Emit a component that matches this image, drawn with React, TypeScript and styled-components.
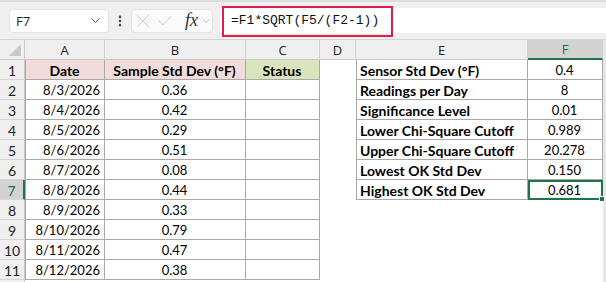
import styled, { createGlobalStyle } from 'styled-components';
import { ChevronDown, X, Check, EllipsisVertical } from 'lucide-react';

const Global = createGlobalStyle`
  html, body { margin: 0; padding: 0; background: #e6e6e6; }
  body { width: 606px; height: 282px; overflow: hidden; }
`;

const Page = styled.div`
  width: 606px;
  height: 282px;
  overflow: hidden;
  display: flex;
  flex-direction: column;
  font-family: Lato, "Liberation Sans", sans-serif;
`;

const Toolbar = styled.div`
  position: relative;
  height: 40px;
  box-sizing: border-box;
  flex: none;
  display: flex;
  align-items: center;
  padding: 0 0 0 9px;
  background: #efefef;
  border-top: 2px solid #dcdcdc;
  border-bottom: 1px solid #d4d4d4;
`;

const NameBox = styled.div`
  width: 100px;
  height: 24px;
  box-sizing: border-box;
  display: flex;
  align-items: center;
  justify-content: space-between;
  padding: 0 5px 0 6px;
  background: #fff;
  border: 1px solid #e2e2e2;
  border-radius: 4px;
  font-family: "Segoe UI", "Open Sans", sans-serif;
  font-size: 13px;
  color: #222;
`;

const Dots = styled.div`
  width: 22px;
  display: flex;
  justify-content: center;
  color: #444;
`;

const IconGroup = styled.div`
  width: 82px;
  height: 24px;
  box-sizing: border-box;
  flex: none;
  display: flex;
  align-items: center;
  gap: 2px;
  padding: 0;
  background: #fafafa;
  border: 1px solid #e4e4e4;
  border-radius: 4px;
  color: #c4c4c4;
  svg { flex: none; }
`;

const Fx = styled.span`
  font-family: "Liberation Serif", serif;
  font-style: italic;
  font-size: 18px;
  color: #333;
  margin-left: 9px;
`;

const FormulaInput = styled.div`
  flex: 1;
  height: 25px;
  margin-left: 7px;
  display: flex;
  align-items: center;
  padding-left: 11px;
  background: #fff;
  font-family: "Liberation Mono", monospace;
  font-size: 13px;
  color: #111;
`;

const Highlight = styled.div`
  position: absolute;
  left: 222px;
  top: 4px;
  width: 171px;
  height: 31px;
  box-sizing: border-box;
  border: 2.5px solid #e21a4d;
`;

const Sheet = styled.div`
  display: grid;
  grid-template-columns: 25px 80px 141px 74px 36px 172px 75px 3px;
  grid-auto-rows: 20px;
  background: #fff;
`;

const Corner = styled.div`
  position: relative;
  background: #efefef;
  border-right: 1px solid #c8c8c8;
  border-bottom: 1px solid #c8c8c8;
  box-sizing: border-box;
  &::after {
    content: '';
    position: absolute;
    right: 3px;
    bottom: 3px;
    border-style: solid;
    border-width: 0 0 12px 12px;
    border-color: transparent transparent #c9c9c9 transparent;
  }
`;

const ColHead = styled.div<{ $active?: boolean }>`
  display: flex;
  align-items: center;
  justify-content: center;
  box-sizing: border-box;
  font-family: "Segoe UI", "Open Sans", sans-serif;
  font-size: 13px;
  color: ${p => (p.$active ? '#1e6b3f' : '#222')};
  background: ${p => (p.$active ? '#d3d3d3' : '#efefef')};
  border-right: 1px solid #d0d0d0;
  border-bottom: ${p => (p.$active ? '2px solid #217346' : '1px solid #c8c8c8')};
`;

const Filler = styled.div`
  background: #e6e6e6;
`;

const RowHead = styled.div<{ $active?: boolean }>`
  display: flex;
  align-items: center;
  justify-content: center;
  box-sizing: border-box;
  font-size: 14px;
  padding-top: 1px;
  color: ${p => (p.$active ? '#1e6b3f' : '#222')};
  background: ${p => (p.$active ? '#d3d3d3' : '#efefef')};
  border-bottom: 1px solid #d6d6d6;
  border-right: ${p => (p.$active ? '2px solid #217346' : '1px solid #c8c8c8')};
`;

type Align = 'left' | 'center' | 'right';

const Cell = styled.div<{
  $align?: Align;
  $bold?: boolean;
  $fill?: string;
  $boxed?: boolean;
  $first?: boolean;
  $selected?: boolean;
}>`
  position: relative;
  box-sizing: border-box;
  display: flex;
  align-items: center;
  justify-content: ${p => (p.$align === 'right' ? 'flex-end' : p.$align === 'center' ? 'center' : 'flex-start')};
  padding: 1px 4px 0 3px;
  font-size: ${p => (p.$bold ? '14px' : '13px')};
  font-weight: ${p => (p.$bold ? 700 : 400)};
  color: #000;
  white-space: nowrap;
  background: ${p => p.$fill || '#fff'};
  border-right: ${p => (p.$boxed ? '1px solid #a9a9a9' : 'none')};
  border-bottom: ${p => (p.$boxed ? '1px solid #a9a9a9' : 'none')};
  border-left: ${p => (p.$first ? '1px solid #a9a9a9' : 'none')};
  outline: ${p => (p.$selected ? '2px solid #217346' : 'none')};
  outline-offset: -2px;
  z-index: ${p => (p.$selected ? 1 : 0)};
`;

const FillHandle = styled.span`
  position: absolute;
  right: -3px;
  bottom: -3px;
  width: 6px;
  height: 6px;
  background: #217346;
  border: 1px solid #fff;
  box-sizing: border-box;
`;

const cols = ['A', 'B', 'C', 'D', 'E', 'F'];

const samples: [string, string][] = [
  ['8/3/2026', '0.36'],
  ['8/4/2026', '0.42'],
  ['8/5/2026', '0.29'],
  ['8/6/2026', '0.51'],
  ['8/7/2026', '0.08'],
  ['8/8/2026', '0.44'],
  ['8/9/2026', '0.33'],
  ['8/10/2026', '0.79'],
  ['8/11/2026', '0.47'],
  ['8/12/2026', '0.38'],
];

const params: [string, string][] = [
  ['Sensor Std Dev (°F)', '0.4'],
  ['Readings per Day', '8'],
  ['Significance Level', '0.01'],
  ['Lower Chi-Square Cutoff', '0.989'],
  ['Upper Chi-Square Cutoff', '20.278'],
  ['Lowest OK Std Dev', '0.150'],
  ['Highest OK Std Dev', '0.681'],
];

function Row({ n }: { n: number }) {
  const i = n - 2;
  const p = params[n - 1];
  const header = n === 1;
  const inTable = n <= 11;
  return (
    <>
      <RowHead $active={n === 7}>{n <= 11 ? n : ''}</RowHead>
      <Cell $boxed={inTable} $first={inTable} $align={header ? 'center' : 'right'} $bold={header} $fill={header ? '#f2dcdb' : undefined}>
        {header ? 'Date' : samples[i]?.[0]}
      </Cell>
      <Cell $boxed={inTable} $align="center" $bold={header} $fill={header ? '#f2dcdb' : undefined}>
        {header ? 'Sample Std Dev (°F)' : samples[i]?.[1]}
      </Cell>
      <Cell $boxed={inTable} $align="center" $bold={header} $fill={header ? '#d8e4bc' : undefined}>
        {header ? 'Status' : ''}
      </Cell>
      <Cell />
      <Cell $boxed={!!p} $first={!!p} $bold>{p?.[0]}</Cell>
      <Cell $boxed={!!p} $align="center" $selected={n === 7}>
        {p?.[1]}
        {n === 7 && <FillHandle />}
      </Cell>
      <Filler />
    </>
  );
}

export default function App() {
  return (
    <Page>
      <Global />
      <Toolbar>
        <NameBox>
          F7
          <ChevronDown size={15} strokeWidth={1.5} color="#444" />
        </NameBox>
        <Dots>
          <EllipsisVertical size={14} strokeWidth={2.5} />
        </Dots>
        <IconGroup>
          <X size={22} strokeWidth={1} />
          <Check size={18} strokeWidth={1.2} />
          <Fx>fx</Fx>
          <ChevronDown size={12} strokeWidth={1.5} color="#aaa" />
        </IconGroup>
        <FormulaInput>=F1*SQRT(F5/(F2-1))</FormulaInput>
        <Highlight />
      </Toolbar>
      <Sheet>
        <Corner />
        {cols.map(c => (
          <ColHead key={c} $active={c === 'F'}>{c}</ColHead>
        ))}
        <Filler />
        {Array.from({ length: 12 }, (_, k) => (
          <Row key={k} n={k + 1} />
        ))}
      </Sheet>
    </Page>
  );
}
